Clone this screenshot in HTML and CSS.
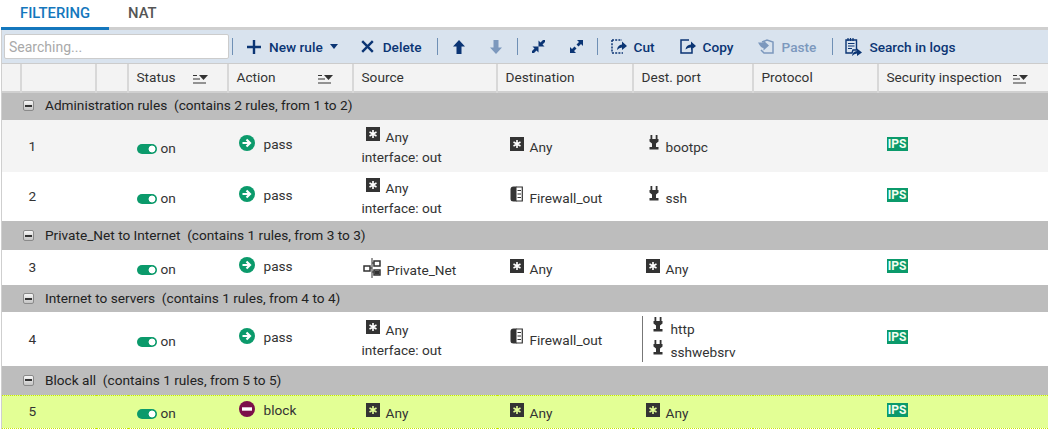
FILE: index.html
```html
<!DOCTYPE html>
<html lang="en">
<head>
<meta charset="utf-8">
<title>Filtering rules</title>
<link rel="stylesheet" href="styles.css">
</head>
<body>
<svg class="defs" width="0" height="0" aria-hidden="true">
  <symbol id="any" viewBox="0 0 14 14"><rect width="14" height="14" fill="#333"/><path d="M7 3v8M3.500 5 10.500 9M10.500 5 3.500 9" stroke="currentColor" stroke-width="1.600"/></symbol>
  <symbol id="plug" viewBox="0 0 12 15"><path d="M2.500 0h1.800v4h3.400V0h1.800v4h1v2.500L8 8.500V12h2.500v2.500h-9V12H4V8.500L1.500 6.500V4h1z" fill="#333"/></symbol>
  <symbol id="fw" viewBox="0 0 13 16"><path d="M3.500 0.500h3v15h-3Q0.500 15.500 0.500 13V3.500Q0.500 0.500 3.500 0.500z" fill="#333"/><path d="M6 1h6.300v14H6M7.500 4.500h3.500M7.500 8h3.500M7.500 11.500h3.500" fill="none" stroke="#333" stroke-width="1.200"/></symbol>
  <symbol id="net" viewBox="0 0 18 20"><path d="M9 0v20" stroke="#333" stroke-width="1"/><path d="M1 8h6v5H1zM11 3h6v5h-6zM11 12h6v5h-6z" fill="none" stroke="#333" stroke-width="1.500"/><path d="M7 10h2M9 5h2M9 14h2" stroke="#333"/><path d="M11.500 13h5v3.500h-5z" fill="#333"/></symbol>
  <symbol id="go" viewBox="0 0 16 16"><circle cx="8" cy="8" r="8" fill="#0b9a6b"/><path d="M3.500 8h7M7.500 4.500 11 8l-3.500 3.500" fill="none" stroke="#fff" stroke-width="2.200"/></symbol>
  <symbol id="stop" viewBox="0 0 16 16"><circle cx="8" cy="8" r="8" fill="#7c0f4a"/><rect x="3" y="6.300" width="10" height="3.400" fill="#fff"/></symbol>
  <symbol id="sort" viewBox="0 0 15 10"><path d="M0 1.500h4M0 5h7M0 9h13" stroke="#333" stroke-width="1.200"/><path d="M6 1h9l-4.500 5z" fill="#333"/></symbol>
</svg>

<main class="app">
  <nav class="tabs">
    <span class="tab tab-active">FILTERING</span>
    <span class="tab">NAT</span>
  </nav>

  <div class="toolbar">
    <input class="search" type="text" placeholder="Searching...">
    <span class="sep sep-first"></span>
    <span class="btn btn-new">
      <svg class="ic" width="14" height="14" viewBox="0 0 14 14"><path d="M7 0v14M0 7h14" stroke="currentColor" stroke-width="2.400"/></svg>
      New rule
      <svg class="caret" width="8" height="5" viewBox="0 0 8 5"><path d="M0 0h8L4 5z" fill="currentColor"/></svg>
    </span>
    <span class="btn btn-delete">
      <svg class="ic" width="13" height="13" viewBox="0 0 13 13"><path d="M1.200 1.200l10.600 10.600M11.800 1.200 1.200 11.800" stroke="currentColor" stroke-width="2.400"/></svg>
      Delete
    </span>
    <span class="sep sep-a"></span>
    <svg class="ic up" width="12" height="14" viewBox="0 0 12 14"><path d="M6 0l6 6.500H8.500V14h-5V6.500H0z" fill="currentColor"/></svg>
    <svg class="ic down" width="12" height="14" viewBox="0 0 12 14"><path d="M3.500 0h5v7.500H12L6 14 0 7.500h3.500z" fill="currentColor"/></svg>
    <span class="sep sep-b"></span>
    <svg class="ic collapse" width="13" height="13" viewBox="0 0 13 13"><path d="M13 0v2L10.500 4.500 12.500 6.500H6.500V.5L8.500 2.500 11 0zM0 13v-2l2.500-2.500-2-2h6v6l-2-2L2 13z" fill="currentColor"/></svg>
    <svg class="ic expand" width="13" height="13" viewBox="0 0 13 13"><path d="M13 0v6L11 4 8.500 6.500 6.500 4.500 9 2 7 0zM0 13V7l2 2 2.500-2.500 2 2L4 11l2 2z" fill="currentColor"/></svg>
    <span class="sep sep-c"></span>
    <span class="btn btn-cut">
      <svg class="ic" width="16" height="15" viewBox="0 0 16 15"><path d="M1 1h10M1 1v13M1 14h11" fill="none" stroke="currentColor" stroke-width="1.500" stroke-dasharray="2 1.200"/><path d="M6 11Q6.500 6 11 5.500V2.500l5 4.500-5 4V8.500Q8 8.500 6 11z" fill="currentColor"/></svg>
      Cut
    </span>
    <span class="btn btn-copy">
      <svg class="ic" width="16" height="15" viewBox="0 0 16 15"><path d="M9 1H1v13h11V10" fill="none" stroke="currentColor" stroke-width="1.500"/><path d="M5.500 10.500Q6 6 11 5.500V2.500l5 4.500-5 4V8.500Q8 8.500 5.500 10.500z" fill="currentColor"/></svg>
      Copy
    </span>
    <span class="btn btn-paste">
      <svg class="ic" width="17" height="15" viewBox="0 0 17 15"><path d="M4 3 9 1l6 2v11H6L3 11" fill="none" stroke="currentColor" stroke-width="1.500"/><path d="M0 3.500h5.500V1.500l5.500 5-5.500 5V9Q3 9 0 3.500z" fill="currentColor"/></svg>
      Paste
    </span>
    <span class="sep sep-d"></span>
    <span class="btn btn-logs">
      <svg class="ic" width="17" height="18" viewBox="0 0 17 18"><path d="M1 2h10.500v10H8L7 15H1z" fill="none" stroke="currentColor" stroke-width="1.400"/><path d="M3 0v3M5.500 0v3M8 0v3M3 5.500h6.500M3 8h6.500M3 10.500h4" stroke="currentColor" stroke-width="1.200"/><path d="M7 18Q7.500 13.500 12 13V10.500l5 4-5 3.500v-2.500Q9 15.500 7 18z" fill="currentColor"/></svg>
      Search in logs
    </span>
  </div>

  <table class="rules">
    <colgroup>
      <col class="c-a"><col class="c-b"><col class="c-c"><col class="c-d"><col class="c-e">
      <col class="c-f"><col class="c-g"><col class="c-h"><col class="c-i"><col class="c-j">
    </colgroup>
    <thead>
      <tr>
        <th></th><th></th><th></th>
        <th><span class="th-in th-status">Status <svg class="sort" width="15" height="10"><use href="#sort"/></svg></span></th>
        <th><span class="th-in th-action">Action <svg class="sort" width="15" height="10"><use href="#sort"/></svg></span></th>
        <th>Source</th><th>Destination</th><th>Dest. port</th><th>Protocol</th>
        <th><span class="th-in th-sec">Security inspection <svg class="sort" width="15" height="10"><use href="#sort"/></svg></span></th>
      </tr>
    </thead>
    <tbody>
      <tr class="group h28"><td colspan="10"><span class="minus"></span>Administration rules&nbsp; (contains 2 rules, from 1 to 2)</td></tr>
      <tr class="rule alt h52">
        <td></td><td class="num" colspan="2">1</td>
        <td class="st"><span class="toggle"></span>on</td>
        <td class="act"><svg class="a-ic" width="16" height="16"><use href="#go"/></svg>pass</td>
        <td class="src"><div class="ln"><svg class="obj" width="14" height="14"><use href="#any"/></svg>Any</div><div class="iface">interface: out</div></td>
        <td class="dst"><svg class="obj" width="14" height="14"><use href="#any"/></svg>Any</td>
        <td class="port"><svg class="plug" width="12" height="15"><use href="#plug"/></svg>bootpc</td>
        <td></td>
        <td class="sec"><span class="ips">IPS</span></td>
      </tr>
      <tr class="rule h49">
        <td></td><td class="num" colspan="2">2</td>
        <td class="st"><span class="toggle"></span>on</td>
        <td class="act"><svg class="a-ic" width="16" height="16"><use href="#go"/></svg>pass</td>
        <td class="src"><div class="ln"><svg class="obj" width="14" height="14"><use href="#any"/></svg>Any</div><div class="iface">interface: out</div></td>
        <td class="dst"><svg class="fw" width="13" height="16"><use href="#fw"/></svg>Firewall_out</td>
        <td class="port"><svg class="plug" width="12" height="15"><use href="#plug"/></svg>ssh</td>
        <td></td>
        <td class="sec"><span class="ips">IPS</span></td>
      </tr>
      <tr class="group h29"><td colspan="10"><span class="minus"></span>Private_Net to Internet&nbsp; (contains 1 rules, from 3 to 3)</td></tr>
      <tr class="rule h35">
        <td></td><td class="num" colspan="2">3</td>
        <td class="st"><span class="toggle"></span>on</td>
        <td class="act"><svg class="a-ic" width="16" height="16"><use href="#go"/></svg>pass</td>
        <td class="src src-net"><svg class="net" width="18" height="20"><use href="#net"/></svg>Private_Net</td>
        <td class="dst"><svg class="obj" width="14" height="14"><use href="#any"/></svg>Any</td>
        <td class="port port-any"><svg class="obj" width="14" height="14"><use href="#any"/></svg>Any</td>
        <td></td>
        <td class="sec"><span class="ips">IPS</span></td>
      </tr>
      <tr class="group h27"><td colspan="10"><span class="minus"></span>Internet to servers&nbsp; (contains 1 rules, from 4 to 4)</td></tr>
      <tr class="rule h54">
        <td></td><td class="num" colspan="2">4</td>
        <td class="st"><span class="toggle"></span>on</td>
        <td class="act"><svg class="a-ic" width="16" height="16"><use href="#go"/></svg>pass</td>
        <td class="src"><div class="ln"><svg class="obj" width="14" height="14"><use href="#any"/></svg>Any</div><div class="iface">interface: out</div></td>
        <td class="dst"><svg class="fw" width="13" height="16"><use href="#fw"/></svg>Firewall_out</td>
        <td class="port port-multi">
          <div class="multi">
            <div class="m-ln"><svg class="plug" width="12" height="15"><use href="#plug"/></svg>http</div>
            <div class="m-ln"><svg class="plug" width="12" height="15"><use href="#plug"/></svg>sshwebsrv</div>
          </div>
        </td>
        <td></td>
        <td class="sec"><span class="ips">IPS</span></td>
      </tr>
      <tr class="group h29"><td colspan="10"><span class="minus"></span>Block all&nbsp; (contains 1 rules, from 5 to 5)</td></tr>
      <tr class="rule sel h33">
        <td></td><td class="num" colspan="2">5</td>
        <td class="st"><span class="toggle"></span>on</td>
        <td class="act"><svg class="a-ic" width="16" height="16"><use href="#stop"/></svg>block</td>
        <td class="src src-one"><svg class="obj" width="14" height="14"><use href="#any"/></svg>Any</td>
        <td class="dst"><svg class="obj" width="14" height="14"><use href="#any"/></svg>Any</td>
        <td class="port port-any"><svg class="obj" width="14" height="14"><use href="#any"/></svg>Any</td>
        <td></td>
        <td class="sec"><span class="ips">IPS</span></td>
      </tr>
    </tbody>
  </table>
</main>
</body>
</html>
```
FILE: styles.css
```css
* { box-sizing: border-box; }
html, body { margin: 0; background: #fff; }
body {
  width: 1049px;
  height: 430px;
  overflow: hidden;
  font: 13.650px/20px Roboto, "Liberation Sans", sans-serif;
  color: #333;
}
.defs { position: absolute; }
.app { margin-left: 1px; width: 1047px; }

.tabs {
  display: flex;
  height: 30px;
  border-bottom: 3px solid #cfcfcf;
}
.tab {
  height: 30px;
  padding: 3px 19px 0;
  font-size: 14.800px;
  font-weight: 500;
  color: #555;
  width: 108px;
}
.tab-active {
  color: #1477bd;
  border-bottom: 3px solid #1477bd;
}

.toolbar {
  display: flex;
  align-items: center;
  height: 34px;
  padding-left: 2px;
  background: #d9e3ee;
  border-left: 1px solid #cfcfcf;
  border-bottom: 1px solid #ccc;
  color: #0b3574;
  font-weight: 500;
  white-space: nowrap;
}
.search {
  width: 225px;
  height: 25px;
  padding: 0 4px;
  border: 1px solid #ccc;
  border-radius: 2px;
  background: #fff;
  font: 14px Roboto, sans-serif;
}
.search::placeholder { color: #a9a9a9; }
.sep { width: 1px; height: 17px; background: #6f90b5; flex: none; }
.btn { display: inline-flex; align-items: center; gap: 8px; }
.ic { flex: none; }
.caret { margin-left: -1px; }
.sep-first { margin-left: 3px; }
.btn-new { margin-left: 14px; }
.btn-delete { margin-left: 23px; gap: 9px; }
.sep-a { margin-left: 15px; }
.up { margin-left: 15px; }
.down { margin-left: 25px; color: #7c98bd; }
.sep-b { margin-left: 15px; }
.collapse { margin-left: 14px; }
.expand { margin-left: 25px; }
.sep-c { margin-left: 14px; }
.btn-cut { margin-left: 13px; gap: 7px; }
.btn-copy { margin-left: 25px; gap: 7px; }
.btn-paste { margin-left: 24px; color: #7c98bd; gap: 7px; }
.sep-d { margin-left: 16px; }
.btn-logs { margin-left: 12px; gap: 7px; }

.rules {
  width: 1046px;
  border-collapse: collapse;
  table-layout: fixed;
  border-left: 1px solid #cfcfcf;
}
.c-a { width: 19px; }
.c-b { width: 75px; }
.c-c { width: 32px; }
.c-d { width: 100px; }
.c-e { width: 125px; }
.c-f { width: 144px; }
.c-g { width: 136px; }
.c-h { width: 120px; }
.c-i { width: 125px; }
.c-j { width: 170px; }

thead tr { height: 28px; background: #f3f3f3; border-bottom: 2px solid #d0d0d0; }
th {
  padding: 0 0 2px 8px;
  font-weight: 400;
  text-align: left;
  border-right: 2px solid #d8d8d8;
}
th:last-child { border-right: 0; }
.th-in { display: flex; align-items: center; }
.sort { margin-top: 5px; flex: none; }
.th-status .sort { margin-left: 17px; }
.th-action .sort { margin-left: 42px; }
.th-sec .sort { margin-left: 11px; }

.group { background: #bdbdbd; color: #222; }
.group td { padding: 0 0 1px 21px; white-space: nowrap; }
.h28 td { padding-bottom: 3px; }
.minus {
  display: inline-block;
  width: 11px;
  height: 11px;
  margin: 0 11px 0 0;
  vertical-align: -1px;
  border: 1px solid #8a8a8a;
  border-radius: 2px;
  background: linear-gradient(#333, #333) center / 7px 2px no-repeat, linear-gradient(#f6f6f6, #c4c4c4);
}
.h27 { height: 27px; }
.h28 { height: 28px; }
.h29 { height: 29px; }
.h33 { height: 33px; }
.h35 { height: 35px; }
.h49 { height: 49px; }
.h52 { height: 52px; }
.h54 { height: 54px; }

.rule td { padding: 0 0 0 8px; vertical-align: middle; }
.alt { background: #f4f4f4; }
.sel { background: #e3ff95; }
.sel td { border-top: 1px dotted #c6e800; border-bottom: 1px dotted #c6e800; }
.rule .num { padding: 0 0 1px 8px; }
.rule .st { padding: 3px 0 0 9px; }
.rule .act { padding: 0 0 4px 11px; }
.rule .src { padding: 2px 0 0 9px; }
.rule .dst { padding: 2px 0 0 13px; }
.rule .port { padding: 2px 0 0 15px; }
.rule .port-any { padding-left: 13px; }
.rule .port-multi { padding-top: 0; }
.rule .sec { padding: 0 0 4px 9px; }
.rule .src-net { padding: 3px 0 0 10px; }
.rule .src-one { padding: 3px 0 0 13px; }

.toggle {
  display: inline-block;
  width: 20px;
  height: 10px;
  margin-right: 4px;
  vertical-align: -1px;
  border-radius: 5px;
  background: radial-gradient(circle at 15px 5px, #fff 0 3.200px, transparent 3.700px), #0b9a6b;
}
.a-ic { margin-right: 9px; vertical-align: -2px; }
.ln { padding-left: 4px; }
.obj { margin-right: 6px; vertical-align: 1px; color: #fff; }
.sel .obj { color: #e3ff95; }
.plug { margin: -4px 6px 0 0; vertical-align: 2px; }
.fw { margin: -4px 7px 0 0; vertical-align: 1px; }
.net { margin-right: 6px; vertical-align: -3px; }
.ips {
  display: block;
  width: 21px;
  height: 14px;
  background: #0b9a6b;
  color: #f2fff0;
  font: 700 12px/14px Roboto, sans-serif;
  text-align: center;
}
.multi {
  margin-left: -6px;
  padding: 2px 0 0 9px;
  border-left: 1px solid #777;
  height: 46px;
}
.m-ln { height: 23px; line-height: 23px; }
.m-ln .plug { margin-right: 7px; }
```
